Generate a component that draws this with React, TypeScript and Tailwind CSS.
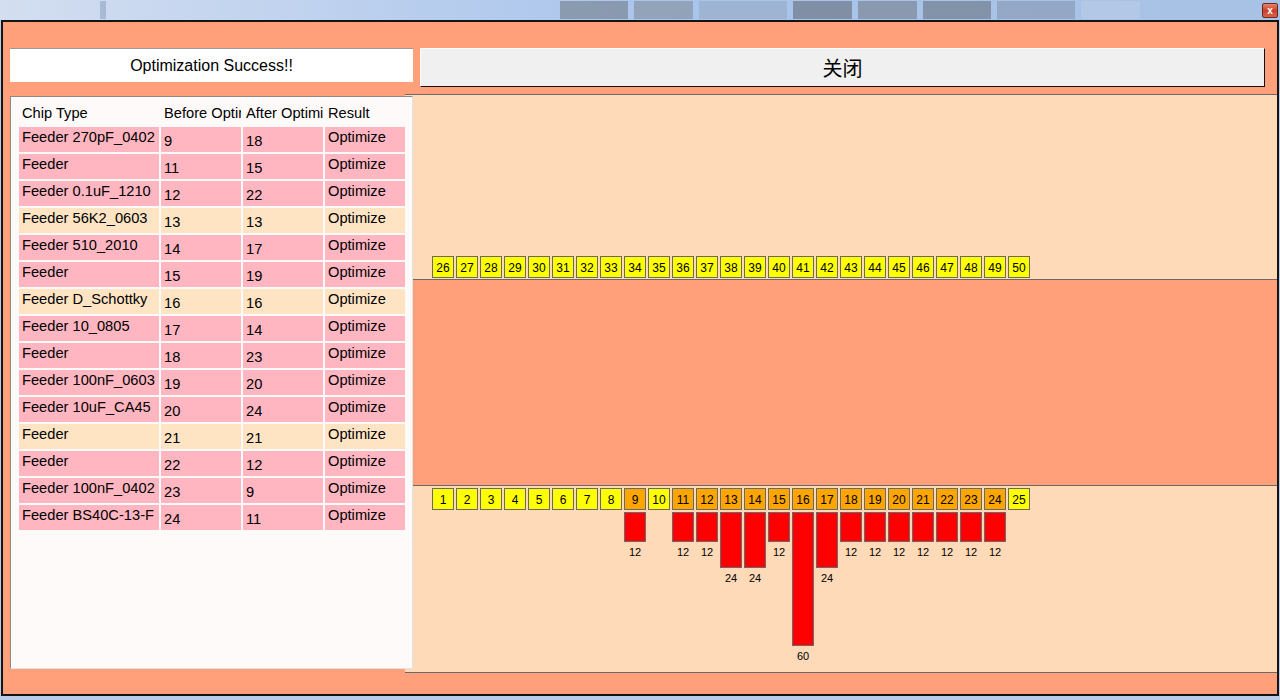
import React from 'react';

type Row = { chip: string; before: number; after: number; same?: boolean };

const rows: Row[] = [
  { chip: 'Feeder 270pF_0402', before: 9, after: 18 },
  { chip: 'Feeder', before: 11, after: 15 },
  { chip: 'Feeder 0.1uF_1210', before: 12, after: 22 },
  { chip: 'Feeder 56K2_0603', before: 13, after: 13, same: true },
  { chip: 'Feeder 510_2010', before: 14, after: 17 },
  { chip: 'Feeder', before: 15, after: 19 },
  { chip: 'Feeder D_Schottky', before: 16, after: 16, same: true },
  { chip: 'Feeder 10_0805', before: 17, after: 14 },
  { chip: 'Feeder', before: 18, after: 23 },
  { chip: 'Feeder 100nF_0603', before: 19, after: 20 },
  { chip: 'Feeder 10uF_CA45', before: 20, after: 24 },
  { chip: 'Feeder', before: 21, after: 21, same: true },
  { chip: 'Feeder', before: 22, after: 12 },
  { chip: 'Feeder 100nF_0402', before: 23, after: 9 },
  { chip: 'Feeder BS40C-13-F', before: 24, after: 11 },
];

// slot -> bar value (bottom rail)
const bars: Record<number, number> = {
  9: 12, 11: 12, 12: 12, 13: 24, 14: 24, 15: 12, 16: 60, 17: 24,
  18: 12, 19: 12, 20: 12, 21: 12, 22: 12, 23: 12, 24: 12,
};

const upper = Array.from({ length: 25 }, (_, i) => i + 26);
const lower = Array.from({ length: 25 }, (_, i) => i + 1);

function Slot({ n, used }: { n: number; used?: boolean }) {
  return (
    <div
      className={`flex h-[22px] w-[22px] items-center justify-center border border-[#696969] pt-[1px] text-[12px] leading-none text-black ${
        used ? 'bg-[#ffa500]' : 'bg-[#ffff00]'
      }`}
    >
      {n}
    </div>
  );
}

function Desktop() {
  return (
    <div className="flex h-[20px] w-full items-stretch bg-gradient-to-r from-[#d3def0] via-[#aac5ec] to-[#a7c2e4]">
      <div className="w-[100px]" />
      <div className="my-[1px] w-[6px] bg-[#8fa3c2] opacity-60" />
      <div className="flex-1" />
      <div className="flex w-[580px] gap-[6px] py-[1px] opacity-70">
        <div className="w-[70px] bg-[#7c8796]" />
        <div className="w-[60px] bg-[#8995a6]" />
        <div className="w-[90px] bg-[#9aaec8]" />
        <div className="w-[60px] bg-[#6f7a88]" />
        <div className="w-[60px] bg-[#7d8898]" />
        <div className="w-[70px] bg-[#737f8f]" />
        <div className="w-[80px] bg-[#8c9eb8]" />
        <div className="w-[60px] bg-[#b7cbe6]" />
      </div>
      <div className="w-[140px]" />
    </div>
  );
}

export default function App() {
  return (
    <div
      className="relative h-[700px] w-[1280px] overflow-hidden bg-[#b9cde9]"
      style={{ fontFamily: '"Liberation Sans", Arial, sans-serif' }}
    >
      <Desktop />
      <div className="absolute right-[2px] top-[3px] flex h-[15px] w-[16px] items-center justify-center rounded-[2px] border border-[#6b2a1c] bg-gradient-to-b from-[#e8826a] via-[#c9412a] to-[#d9604a] text-[10px] font-bold leading-none text-white">
        x
      </div>

      {/* window */}
      <div className="ml-px h-[676px] w-[1278px] border-2 border-[#141414] bg-[#ffa07a]">
        <div className="flex items-start pl-[7px] pt-[26px]">
          <div className="flex h-[34px] w-[403px] items-center justify-center border-t border-t-[#9a9a9a] bg-white text-[16px] text-black">
            Optimization Success!!
          </div>
          <button
            type="button"
            className="ml-[7px] flex h-[39px] w-[845px] items-center justify-center border border-b-[#111] border-l-white border-r-[#111] border-t-white bg-[#f0f0f0] text-[20px] text-black"
            style={{ fontFamily: '"Noto Sans CJK SC", "Liberation Sans", sans-serif' }}
          >
            关闭
          </button>
        </div>

        <div className="mt-[7px] flex items-start pl-[7px]">
          {/* result list */}
          <div className="relative z-10 mt-[2px] h-[573px] w-[403px] border border-b-[#e2e2e2] border-l-[#8a8a8a] border-r-[#e2e2e2] border-t-[#8a8a8a] bg-[#fffafa] pl-[8px] pt-[6px] text-[14.67px] leading-[17px] text-black">
            <div className="flex h-[22px] gap-[2px] pt-[2px]">
              <div className="w-[140px] overflow-hidden whitespace-nowrap pl-[3px]">Chip Type</div>
              <div className="w-[80px] overflow-hidden whitespace-nowrap pl-[3px]">Before Optimization</div>
              <div className="w-[80px] overflow-hidden whitespace-nowrap pl-[3px]">After Optimization</div>
              <div className="w-[80px] overflow-hidden whitespace-nowrap pl-[3px]">Result</div>
            </div>
            <div className="mt-[2px] flex flex-col gap-[2px]">
              {rows.map((r, i) => {
                const bg = r.same ? 'bg-[#ffe4c4]' : 'bg-[#ffb6c1]';
                return (
                  <div key={i} className="flex h-[25px] gap-[2px]">
                    <div className={`w-[140px] overflow-hidden whitespace-nowrap pl-[3px] pt-[2px] ${bg}`}>{r.chip}</div>
                    <div className={`flex w-[80px] items-center pl-[3px] pt-[3px] ${bg}`}>{r.before}</div>
                    <div className={`flex w-[80px] items-center pl-[3px] pt-[3px] ${bg}`}>{r.after}</div>
                    <div className={`w-[80px] pl-[3px] pt-[2px] ${bg}`}>Optimize</div>
                  </div>
                );
              })}
            </div>
          </div>

          {/* feeder rails */}
          <div className="ml-[-8px] flex h-[579px] w-[872px] flex-col border-y border-[#696969] bg-[#ffdab9]">
            <div className="flex h-[185px] items-end gap-[2px] border-b border-[#696969] pb-[1px] pl-[27px]">
              {upper.map((n) => (
                <Slot key={n} n={n} />
              ))}
            </div>
            <div className="h-[206px] border-b border-[#696969] bg-[#ffa07a]" />
            <div className="flex flex-1 items-start gap-[2px] pl-[27px] pt-[2px]">
              {lower.map((n) => {
                const v = bars[n];
                return (
                  <div key={n} className="flex w-[22px] flex-col items-center">
                    <Slot n={n} used={v !== undefined} />
                    {v !== undefined && (
                      <>
                        <div
                          className="mt-[2px] w-[22px] border border-[#696969] bg-[#ff0000]"
                          style={{ height: Math.round(v * 2.167 + 4) }}
                        />
                        <span className="mt-[4px] text-[11px] leading-[13px] text-black">{v}</span>
                      </>
                    )}
                  </div>
                );
              })}
            </div>
          </div>
        </div>
      </div>
    </div>
  );
}
